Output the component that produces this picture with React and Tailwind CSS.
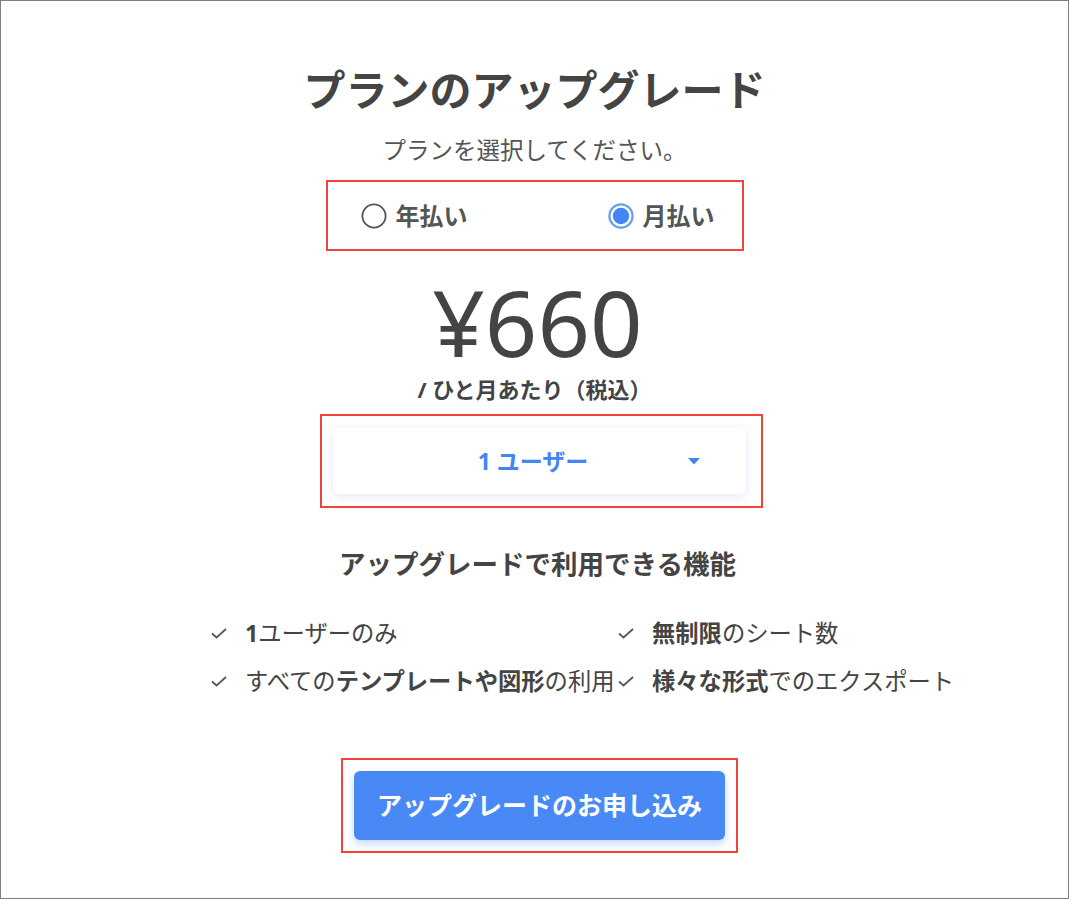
import React from 'react';

const font = { fontFamily: '"Noto Sans", "Noto Sans CJK JP", sans-serif' };

const Check = () => (
	<svg width="16" height="11" viewBox="0 0 16 11" className="shrink-0">
		<polyline points="1,5.5 5.5,9.5 15,1" fill="none" stroke="#555" strokeWidth="1.7" />
	</svg>
);

const Radio = ({ checked, label }) => (
	<label className="flex items-center gap-[9px] cursor-pointer">
		{checked ? (
			<svg width="26" height="26" viewBox="0 0 26 26">
				<circle cx="13" cy="13" r="11.6" fill="none" stroke="#6a9ef5" strokeWidth="2.2" />
				<circle cx="13" cy="13" r="8.2" fill="#4285f4" />
			</svg>
		) : (
			<svg width="26" height="26" viewBox="0 0 26 26">
				<circle cx="13" cy="13" r="11.6" fill="none" stroke="#555" strokeWidth="1.8" />
			</svg>
		)}
		<span className="text-[24px] leading-[30px] font-bold text-[#555]">{label}</span>
	</label>
);

const Feature = ({ children }) => (
	<div className="flex items-center h-[48px] whitespace-nowrap">
		<Check />
		<span className="ml-[18px] text-[23.3px] text-[#444]">{children}</span>
	</div>
);

export default function App() {
	return (
		<div style={font} className="w-full h-screen border border-[#7d7d7d] bg-white flex flex-col items-center overflow-hidden">
			<h1 className="mt-[64px] text-[42px] leading-[50px] font-bold text-[#444]">プランのアップグレード</h1>
			<p className="mt-[20px] text-[23.5px] leading-[30px] text-[#555]">プランを選択してください。</p>

			<div className="mt-[15px] w-[418px] h-[71px] border-2 border-[#f0433a] flex items-center justify-between pl-[33px] pr-[27px]">
				<Radio label="年払い" />
				<Radio checked label="月払い" />
			</div>

			<div className="mt-[31px] pl-[6px] text-[92px] leading-[80px] text-[#444]">¥660</div>
			<div className="mt-[13px] text-[22px] leading-[28px] font-bold text-[#444]">/ ひと月あたり（税込）</div>

			<div className="self-start ml-[319px] mt-[11px] w-[443px] h-[94px] border-2 border-[#f0433a] px-[11px] pt-[12px]">
				<div className="h-[66px] w-[413px] rounded-md bg-white shadow-[0_2px_10px_rgba(66,133,244,0.18)] flex items-center pl-[45px] pr-[46px]">
					<span className="flex-1 text-center text-[23px] font-bold text-[#4285f4]">1 ユーザー</span>
					<svg width="12" height="7" viewBox="0 0 12 7">
						<polygon points="0,0 12,0 6,6.5" fill="#4285f4" />
					</svg>
				</div>
			</div>

			<h2 className="mt-[38px] ml-[6px] text-[26.5px] leading-[36px] font-bold text-[#444]">アップグレードで利用できる機能</h2>

			<div className="self-start ml-[210px] mt-[27px] grid grid-cols-[407px_auto]">
				<Feature><b>1</b>ユーザーのみ</Feature>
				<Feature><b>無制限</b>のシート数</Feature>
				<Feature>すべての<b>テンプレートや図形</b>の利用</Feature>
				<Feature><b>様々な形式</b>でのエクスポート</Feature>
			</div>

			<div className="self-start ml-[340px] mt-[53px] w-[397px] h-[95px] border-2 border-[#f0433a] p-[11px]">
				<button className="w-full h-full rounded-md bg-[#4889f5] text-white text-[25px] font-bold shadow-[0_4px_8px_rgba(66,133,244,0.3)]">
					アップグレードのお申し込み
				</button>
			</div>
		</div>
	);
}
